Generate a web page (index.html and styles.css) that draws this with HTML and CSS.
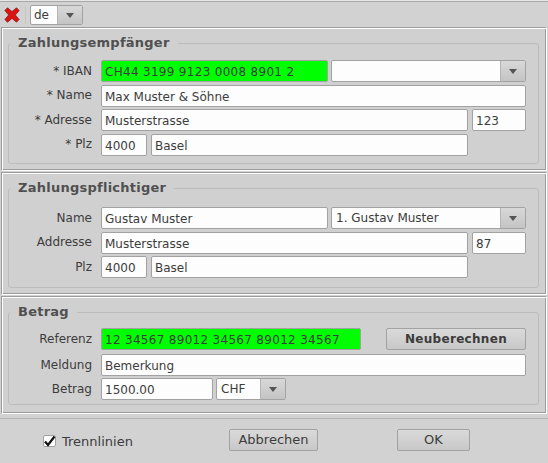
FILE: index.html
```html
<!DOCTYPE html>
<html lang="de">
<head>
    <meta charset="UTF-8">
    <title>Zahlung</title>
    <link rel="stylesheet" href="styles.css">
</head>
<body>
    <div class="toolbar">
        <svg class="close-icon" width="16" height="16" viewBox="0 0 16 16">
            <path d="M0.8 3.5 L3.5 0.8 L8 4.6 L12.5 0.8 L15.2 3.5 L11.3 8 L15.2 12.5 L12.5 15.2 L8 11.4 L3.5 15.2 L0.8 12.5 L4.7 8 Z" fill="#dc1414" stroke="#7a1a1a" stroke-width="0.7"/>
        </svg>
        <div class="toolbar-sep"></div>
        <div class="combo lang">
            <div class="combo-text">de</div>
            <div class="combo-arrow"></div>
        </div>
    </div>

    <div class="section sec-1">
        <div class="group">
            <div class="group-title">Zahlungsempfänger</div>
            <div class="row">
                <div class="label">* IBAN</div>
                <div class="field ok w-227">CH44 3199 9123 0008 8901 2</div>
                <div class="combo w-195">
                    <div class="combo-text"></div>
                    <div class="combo-arrow"></div>
                </div>
            </div>
            <div class="row">
                <div class="label">* Name</div>
                <div class="field w-425">Max Muster &amp; Söhne</div>
            </div>
            <div class="row">
                <div class="label">* Adresse</div>
                <div class="field w-367">Musterstrasse</div>
                <div class="field w-54">123</div>
            </div>
            <div class="row">
                <div class="label">* Plz</div>
                <div class="field w-46">4000</div>
                <div class="field w-317">Basel</div>
            </div>
        </div>
    </div>

    <div class="section sec-2">
        <div class="group">
            <div class="group-title">Zahlungspflichtiger</div>
            <div class="row">
                <div class="label">Name</div>
                <div class="field w-227">Gustav Muster</div>
                <div class="combo w-195">
                    <div class="combo-text">1. Gustav Muster</div>
                    <div class="combo-arrow"></div>
                </div>
            </div>
            <div class="row">
                <div class="label">Addresse</div>
                <div class="field w-367">Musterstrasse</div>
                <div class="field w-54">87</div>
            </div>
            <div class="row">
                <div class="label">Plz</div>
                <div class="field w-46">4000</div>
                <div class="field w-317">Basel</div>
            </div>
        </div>
    </div>

    <div class="section sec-3">
        <div class="group">
            <div class="group-title">Betrag</div>
            <div class="row row-tall">
                <div class="label">Referenz</div>
                <div class="field ok w-260">12 34567 89012 34567 89012 34567</div>
                <div class="btn btn-bold">Neuberechnen</div>
            </div>
            <div class="row">
                <div class="label">Meldung</div>
                <div class="field w-425">Bemerkung</div>
            </div>
            <div class="row">
                <div class="label">Betrag</div>
                <div class="field w-112">1500.00</div>
                <div class="combo w-70">
                    <div class="combo-text">CHF</div>
                    <div class="combo-arrow"></div>
                </div>
            </div>
        </div>
    </div>

    <div class="footer">
        <div class="check-wrap">
            <div class="check">
                <svg width="13" height="13" viewBox="0 0 13 13">
                    <path d="M2 6.5 L5 10 L11.5 1.5" fill="none" stroke="#111" stroke-width="2.2"/>
                </svg>
            </div>
            <div class="check-label">Trennlinien</div>
        </div>
        <div class="btn btn-cancel">Abbrechen</div>
        <div class="btn btn-ok">OK</div>
    </div>
</body>
</html>
```
FILE: styles.css
```css
* {
    box-sizing: border-box;
}
html, body {
    height: 100%;
}
body {
    margin: 0;
    overflow: hidden;
    background-color: #d2d2d2;
    color: #3c3c3c;
    font-family: 'DejaVu Sans', sans-serif;
    font-size: 12px;
    border-top: 1px solid #e6e6e6;
}
.toolbar {
    display: flex;
    align-items: center;
    height: 26px;
    padding-left: 4px;
    border-top: 1px solid #a8a8a8;
}
.close-icon {
    flex: none;
}
.toolbar-sep {
    width: 1px;
    height: 18px;
    margin: 0 4px 0 5px;
    background-color: #c4c4c4;
}
.section {
    display: flex;
    margin: 0 1px;
    padding: 15px 7px 6px 6px;
    border: 1px solid;
    border-color: #9c9c9c #fff #fff #9c9c9c;
    box-shadow: inset 1px 1px 0 #fff, inset -1px -1px 0 #9c9c9c;
    background-color: #d0d0d0;
}
.sec-1 {
    height: 144px;
}
.sec-2 {
    height: 123px;
    margin-top: 1px;
}
.sec-3 {
    height: 118px;
    margin-top: 1px;
    padding-bottom: 8px;
}
.group {
    position: relative;
    flex: 1;
    display: flex;
    flex-direction: column;
    padding-right: 12px;
    border: 1px solid #bcbcbc;
    border-radius: 3px;
}
.sec-1 .group {
    gap: 2.67px;
    padding-top: 16px;
}
.sec-2 .group {
    gap: 2.5px;
    padding-top: 18px;
}
.sec-3 .group {
    gap: 2px;
    padding-top: 15px;
}
.group-title {
    position: absolute;
    top: -9px;
    left: 1px;
    padding: 0 8px;
    background-color: #d0d0d0;
    color: #505050;
    font-size: 13px;
    font-weight: bold;
    letter-spacing: 0.25px;
}
.row {
    display: flex;
    gap: 3px;
    align-items: center;
    height: 22px;
}
.row-tall {
    margin-bottom: 2px;
}
.label {
    flex: none;
    width: 83px;
    margin-right: 6px;
    padding-bottom: 1px;
    text-align: right;
}
.field {
    flex: none;
    height: 22px;
    padding: 0 3px;
    line-height: 22px;
    white-space: nowrap;
    overflow: hidden;
    background-color: #fdfdfd;
    border: 1px solid #a2a2a2;
    border-radius: 2px;
}
.field.ok {
    background-color: #00ff00;
    letter-spacing: 0.3px;
}
.w-46 { width: 46px; }
.w-54 { width: 54px; margin-left: 1px; }
.w-112 { width: 112px; }
.w-227 { width: 227px; }
.w-260 { width: 260px; }
.w-317 { width: 317px; margin-left: 1px; }
.w-367 { width: 367px; }
.w-425 { width: 425px; }
.w-195 { width: 195px; }
.w-70 { width: 70px; }
.combo {
    flex: none;
    display: flex;
    height: 22px;
    border: 1px solid #a2a2a2;
    border-radius: 2px;
    background-color: #fdfdfd;
    overflow: hidden;
}
.combo.lang {
    width: 53px;
    height: 20px;
}
.combo-text {
    flex: 1;
    padding: 0 4px;
    line-height: 21px;
    white-space: nowrap;
}
.lang .combo-text {
    line-height: 18px;
    padding: 0 3px;
}
.combo-arrow {
    position: relative;
    flex: none;
    width: 25px;
    border-left: 1px solid #b4b4b4;
    background: linear-gradient(#d8d8d8, #c4c4c4);
}
.combo-arrow::after {
    content: '';
    position: absolute;
    top: 50%;
    left: 8px;
    margin-top: -2px;
    border-left: 4px solid transparent;
    border-right: 4px solid transparent;
    border-top: 5px solid #555;
}
.btn {
    flex: none;
    height: 22px;
    line-height: 20px;
    text-align: center;
    background: linear-gradient(#dadada, #c8c8c8);
    border: 1px solid #a2a2a2;
    border-radius: 2px;
}
.btn-bold {
    width: 140px;
    margin-left: 22px;
    font-weight: bold;
    letter-spacing: 0.3px;
}
.footer {
    display: flex;
    align-items: center;
    height: 45px;
    margin-top: 4px;
    padding-bottom: 2px;
    border-top: 1px solid #b4b4b4;
}
.check-wrap {
    display: flex;
    align-items: center;
    gap: 6px;
    width: 186px;
    margin-left: 43px;
    margin-top: 2px;
    font-size: 13px;
}
.check {
    width: 13px;
    height: 12px;
    background-color: #fdfdfd;
    border: 1px solid #a2a2a2;
    border-radius: 2px;
}
.check svg {
    display: block;
    margin: -1px 0 0 -1px;
}
.btn-cancel {
    width: 89px;
    font-size: 13px;
}
.btn-ok {
    width: 73px;
    margin-left: 79px;
    font-size: 13px;
}
```
